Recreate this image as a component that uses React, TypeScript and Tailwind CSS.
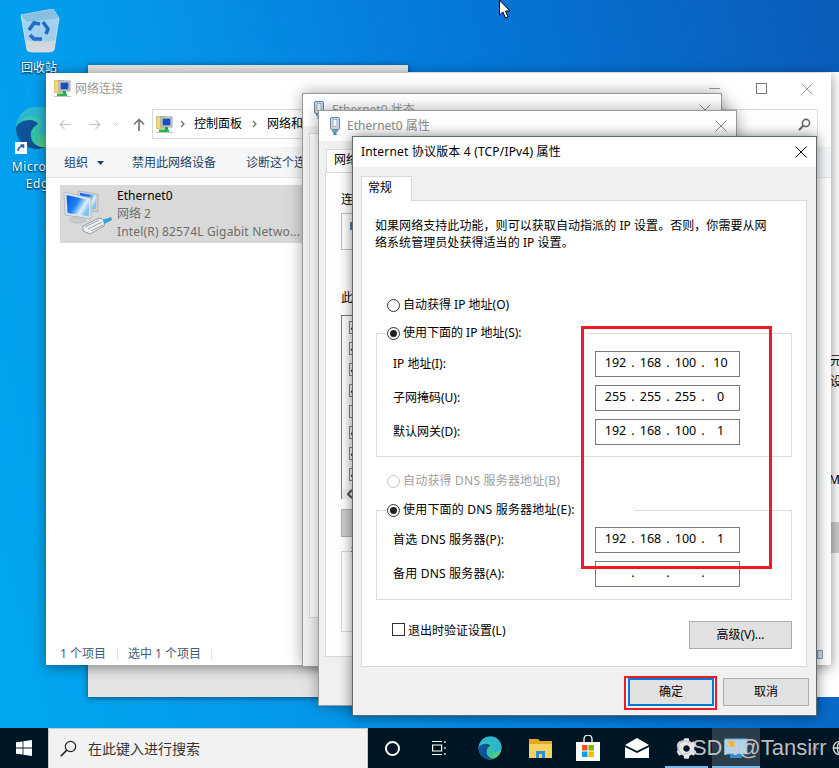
import { FaCog } from "react-icons/fa";
import { Globe, ChevronUp } from "lucide-react";

const octet = "w-[25px] text-center";

function IpBox({ v }: { v: string[] }) {
  return (
    <div className="flex h-[26px] w-[145px] items-center border border-[#7a7a7a] bg-white pb-[2px] pl-[7px] text-[12.5px] tracking-normal text-black">
      <span className={octet}>{v[0]}</span>
      <span className="w-[10px] text-center">.</span>
      <span className={octet}>{v[1]}</span>
      <span className="w-[10px] text-center">.</span>
      <span className={octet}>{v[2]}</span>
      <span className="w-[10px] text-center">.</span>
      <span className={octet}>{v[3]}</span>
    </div>
  );
}

function Row({ label, v }: { label: string; v: string[] }) {
  return (
    <div className="flex items-center justify-between pl-[16px] pr-[51px]">
      <span>{label}</span>
      <IpBox v={v} />
    </div>
  );
}

function Radio({ on, off }: { on?: boolean; off?: boolean }) {
  return (
    <span className={`flex h-[13px] w-[13px] shrink-0 items-center justify-center rounded-full border ${off ? "border-[#c4c4c4]" : "border-[#333]"} bg-white`}>
      {on && <span className="h-[7px] w-[7px] rounded-full bg-[#222]" />}
    </span>
  );
}

function CloseX({ size = 12, color = "#000" }: { size?: number; color?: string }) {
  return (
    <svg width={size} height={size} viewBox="0 0 12 12" stroke={color} strokeWidth="1" fill="none">
      <path d="M.5.5l11 11M11.5.5l-11 11" />
    </svg>
  );
}

function NetFolderIcon() {
  return (
    <svg width="17" height="17" viewBox="0 0 17 17">
      <rect x="0.5" y="0.5" width="9" height="12" fill="#f4d67a" stroke="#c9a94a" strokeWidth=".6" />
      <rect x="5" y="1" width="11" height="10" fill="#dfe6ee" stroke="#7d8a99" strokeWidth=".8" />
      <rect x="6.5" y="2.5" width="8" height="7" fill="#1e4fb4" />
      <rect x="9" y="11" width="3" height="3" fill="#1fa84a" />
      <rect x="3" y="13.5" width="10" height="2.5" fill="#27b455" />
      <rect x="0" y="16" width="17" height="1" fill="#bfc7c9" />
    </svg>
  );
}

function PlugIcon() {
  return (
    <svg width="12" height="18" viewBox="0 0 12 18">
      <rect x="1.5" y="0.5" width="9" height="12" rx="1.5" fill="#c7d6e6" stroke="#6f8499" />
      <rect x="4" y="2.5" width="4" height="7" fill="#f0f5fa" stroke="#8aa0b5" strokeWidth=".7" />
      <rect x="3" y="13" width="6" height="2" fill="#7f9ab3" />
      <rect x="4.5" y="15" width="3" height="3" fill="#1c9ad6" />
    </svg>
  );
}

function NetworkAdapterIcon() {
  return (
    <svg className="shrink-0" width="50" height="46" viewBox="0 0 50 46">
      <defs>
        <linearGradient id="scr" x1="0" y1="0" x2="1" y2="0.6">
          <stop offset="0" stopColor="#0a4fe0" />
          <stop offset=".5" stopColor="#1f86f5" />
          <stop offset=".8" stopColor="#dff1fd" />
          <stop offset="1" stopColor="#7fc2f5" />
        </linearGradient>
      </defs>
      <path d="M15 1l20 3v18l-20-3z" fill="#c9d0d6" stroke="#a4adb4" strokeWidth=".7" />
      <path d="M17 3l16 2.5v14L17 17.5z" fill="url(#scr)" />
      <path d="M1 2l27 6v21L2 25z" fill="#dfe4e8" stroke="#a4adb4" strokeWidth=".7" />
      <path d="M3.5 5L26 10v16.500L4.500 23z" fill="url(#scr)" />
      <ellipse cx="14.500" cy="30" rx="8" ry="3" fill="#c8cccd" stroke="#a9aeb0" strokeWidth=".5" />
      <path d="M20 36l16-8 6 2-1 6-14 8-7-3z" fill="#eef1f3" stroke="#7f888e" strokeWidth=".8" />
      <path d="M22 37l14-7M25 39l14-7M28 41l12-6" stroke="#8f989e" strokeWidth=".9" />
      <path d="M40 30l8-3 1 3-8 4z" fill="#2aa0dc" />
    </svg>
  );
}

function RecycleBin() {
  return (
    <svg width="40" height="44" viewBox="0 0 40 44">
      <defs>
        <linearGradient id="bin" x1="0" y1="0" x2="0" y2="1">
          <stop offset="0" stopColor="#b5dbf3" stopOpacity=".9" />
          <stop offset=".7" stopColor="#a8d2ec" stopOpacity=".95" />
          <stop offset="1" stopColor="#d9dde0" />
        </linearGradient>
      </defs>
      <path d="M1 6L33 0l6 9-5 32q-1 2-6 2H13q-5 0-6-2z" fill="url(#bin)" stroke="#e6f2f9" strokeWidth=".7" />
      <path d="M1 6l32-6 6 9-32 4z" fill="#7fb9dd" opacity=".75" />
      <path d="M6 31q14 4 30 0l-2 10q-1 2-6 2H13q-5 0-6-2z" fill="#d5d8da" opacity=".85" />
      <g stroke="#1f6dc4" strokeWidth="3.600" fill="none">
        <path d="M9 21l5-7 6 1" />
        <path d="M23 13l5 7-2 5" />
        <path d="M22 30h-8l-4-4" />
      </g>
    </svg>
  );
}

function EdgeIcon({ size = 44 }: { size?: number }) {
  return (
    <svg width={size} height={size} viewBox="0 0 44 44">
      <defs>
        <linearGradient id="eA" x1="0" y1="0" x2="1" y2="1">
          <stop offset="0" stopColor="#3bc6d8" />
          <stop offset=".6" stopColor="#35c1a0" />
          <stop offset="1" stopColor="#6fd86c" />
        </linearGradient>
        <linearGradient id="eB" x1="0" y1="0" x2="1" y2="1">
          <stop offset="0" stopColor="#0c59a4" />
          <stop offset="1" stopColor="#114a8b" />
        </linearGradient>
      </defs>
      <circle cx="22" cy="22" r="21" fill="url(#eA)" />
      <path d="M1 22C3 8 15 1 24 1c10 0 19 8 19 19 0 6-5 9-11 9-4 0-8-2-8-4 0-2 3-3 3-7 0-5-5-8-10-8C9 10 3 15 1 22z" fill="#2bb5cf" />
      <path d="M1 22c0 12 9 21 21 21 3 0 6-.6 8-2-6 1-13-3-14-10-1-6 2-10 7-13-2-3-5-4-8-4C8 14 2 17 1 22z" fill="url(#eB)" />
    </svg>
  );
}

function WinLogo() {
  return (
    <svg width="16" height="16" viewBox="0 0 16 16" fill="#fff">
      <path d="M0 2.3l6.6-.9v6.2H0zM7.4 1.3L16 0v7.6H7.4zM0 8.4h6.6v6.2L0 13.7zM7.4 8.4H16V16l-8.6-1.2z" />
    </svg>
  );
}

function BehindStatus() {
  return (
    <div className="absolute left-[302px] top-[93px] flex h-[574px] w-[420px] flex-col border border-[#9a9a9a] bg-[#f0f0f0] shadow-[0_0_14px_rgba(0,0,0,0.35)]">
      <div className="flex h-[32px] items-center bg-white pl-[10px]">
        <PlugIcon />
        <span className="ml-[7px] text-[#9a9a9a]">Ethernet0 状态</span>
        <span className="ml-auto mr-[10px]"><CloseX color="#8a8a8a" /></span>
      </div>
      <div className="mx-[6px] mt-[7px] flex-1 border border-[#d9d9d9] bg-white" />
      <div className="h-[48px]" />
    </div>
  );
}

function BehindProps() {
  return (
    <div className="absolute left-[318px] top-[110px] flex h-[596px] w-[419px] flex-col border border-[#9a9a9a] bg-[#f0f0f0] shadow-[0_0_14px_rgba(0,0,0,0.35)]">
      <div className="flex h-[30px] items-center bg-white pl-[10px]">
        <PlugIcon />
        <span className="ml-[6px] text-[#8a8a8a]">Ethernet0 属性</span>
        <span className="ml-auto mr-[9px]"><CloseX color="#8a8a8a" /></span>
      </div>
      <div className="ml-[7px] mt-[8px] h-[23px] w-[60px] border border-b-0 border-[#d9d9d9] bg-white pl-[7px] leading-[20px] text-black">网络</div>
      <div className="mx-[6px] flex-1 border border-[#d9d9d9] bg-white pl-[15px] text-black">
        <div className="mt-[18px] h-[22px]">连接时使用：</div>
        <div className="h-[37px] w-[300px] border border-[#c0c0c0] pl-[8px] pt-[8px]">
          <span className="block h-[8px] w-[4px] bg-[#4a7fb5]" />
        </div>
        <div className="mt-[39px] h-[26px]">此连接使用下列项目：</div>
        <div className="flex h-[184px] w-[300px] flex-col gap-[8px] border border-[#7a7a7a] pt-[5px]">
          {[1, 1, 1, 1, 0, 1, 1, 1].map((c, i) => (
            <div key={i} className="ml-[7px] h-[13px] w-[13px] shrink-0 border border-[#888] bg-white text-[9px] leading-[11px] text-black">{c ? "✔" : ""}</div>
          ))}
          <div className="mt-auto flex h-[17px] items-center bg-[#f0f0f0] pl-[5px]">
            <svg width="6" height="10" viewBox="0 0 6 10"><path d="M5 1L1 5l4 4" stroke="#555" strokeWidth="2" fill="none" /></svg>
          </div>
        </div>
        <div className="mt-[10px] h-[28px] w-[100px] border border-[#adadad] bg-[#cccccc]" />
        <div className="mt-[14px] h-[81px] w-[300px] border border-[#d9d9d9] pl-[9px]">
          <span className="relative -top-[10px]">描述</span>
        </div>
      </div>
      <div className="h-[48px]" />
    </div>
  );
}

function Explorer() {
  return (
    <div className="absolute left-[46px] top-[73px] flex h-[592px] w-[785px] flex-col bg-white shadow-[0_2px_12px_rgba(0,0,0,0.45)]">
      <div className="flex h-[36px] shrink-0 items-center pb-[5px] pl-[8px]">
        <NetFolderIcon />
        <span className="ml-[4px] text-[#9a9a9a]">网络连接</span>
        <div className="ml-auto flex items-center text-[#8a8a8a]">
          <span className="mr-[36px] h-px w-[11px] bg-[#999]" />
          <span className="mr-[34px] h-[11px] w-[11px] border border-[#777]" />
          <span className="mr-[18px]"><CloseX color="#999" /></span>
        </div>
      </div>
      <div className="flex h-[30px] shrink-0 items-center">
        <div className="flex w-[106px] items-center pl-[13px]">
          <svg width="12" height="11" viewBox="0 0 12 11" stroke="#ccc" strokeWidth="1.3" fill="none"><path d="M12 5.500H1M5.500 1L1 5.500 5.500 10" /></svg>
          <svg className="ml-[18px]" width="12" height="11" viewBox="0 0 12 11" stroke="#ccc" strokeWidth="1.3" fill="none"><path d="M0 5.500h11M6.500 1L11 5.500 6.500 10" /></svg>
          <svg className="ml-[11px]" width="7" height="5" viewBox="0 0 7 5" stroke="#ccc" fill="none"><path d="M1 1l2.500 2.500L6 1" /></svg>
          <svg className="ml-[14px]" width="12" height="13" viewBox="0 0 12 13" stroke="#777" strokeWidth="1.7" fill="none"><path d="M6 13V1.500M1 6.500l5-5 5 5" /></svg>
        </div>
        <div className="flex h-[30px] w-[666px] items-center border border-[#d9d9d9] pl-[3px] text-black">
          <NetFolderIcon />
          <svg className="ml-[7px]" width="5" height="8" viewBox="0 0 5 8" stroke="#666" strokeWidth="1.2" fill="none"><path d="M1 1l3 3-3 3" /></svg>
          <span className="ml-[9px]">控制面板</span>
          <svg className="ml-[10px]" width="5" height="8" viewBox="0 0 5 8" stroke="#666" strokeWidth="1.2" fill="none"><path d="M1 1l3 3-3 3" /></svg>
          <span className="ml-[10px]">网络和 Internet</span>
          <svg className="ml-auto mr-[6px]" width="13" height="13" viewBox="0 0 13 13" stroke="#666" strokeWidth="1.6" fill="none"><circle cx="8" cy="5" r="3.600" /><path d="M5.300 7.700L1 12" strokeWidth="2" /></svg>
        </div>
      </div>
      <div className="mt-[8px] flex h-[31px] shrink-0 items-center border-b border-[#e6e6e6] bg-[#f5f6f7] pl-[18px] pt-[1px] text-[#24405e]">
        <span>组织</span>
        <svg className="ml-[9px]" width="7" height="4" viewBox="0 0 7 4" fill="#24405e"><path d="M0 0h7L3.500 4z" /></svg>
        <span className="ml-[28px]">禁用此网络设备</span>
        <span className="ml-[30px]">诊断这个连接</span>
      </div>
      <div className="flex-1 pl-[14px] pt-[7px]">
        <div className="flex h-[58px] w-[300px] bg-[#d9d9d9] pl-[3px] pt-[5px]">
          <NetworkAdapterIcon />
          <div className="ml-[4px] flex flex-col leading-[18px] text-[#6d6d6d]">
            <span className="-mt-[3px] text-black">Ethernet0</span>
            <span>网络 2</span>
            <span className="whitespace-nowrap tracking-[0.17px]">Intel(R) 82574L Gigabit Netwo...</span>
          </div>
        </div>
      </div>
      <div className="flex h-[24px] shrink-0 items-center pl-[14px] pt-[2px] text-[#3f5a78]">
        <span>1 个项目</span>
        <span className="ml-[11px] h-[11px] w-px bg-[#e2e2e2]" />
        <span className="ml-[10px]">选中 1 个项目</span>
        <span className="ml-[10px] h-[11px] w-px bg-[#e2e2e2]" />
        <span className="ml-auto mr-[8px] h-[9px] w-[6px] border border-[#8aa0b5] bg-[#cfdcea]" />
      </div>
    </div>
  );
}

function Ipv4Dialog() {
  return (
    <div className="absolute left-[352px] top-[136px] flex h-[580px] w-[465px] flex-col border border-[#5d6a70] bg-[#f0f0f0] text-black shadow-[0_0_12px_rgba(0,0,0,0.5)]">
      <div className="flex h-[30px] shrink-0 items-center bg-white pl-[8px]">
        <span className="tracking-[0.18px]">Internet 协议版本 4 (TCP/IPv4) 属性</span>
        <span className="ml-auto mr-[9px]"><CloseX /></span>
      </div>
      <div className="-mb-px flex shrink-0 pl-[8px] pt-[9px]">
        <div className="relative z-10 h-[25px] w-[51px] border border-b-0 border-[#d9d9d9] bg-white pl-[6px] pt-[2px]">常规</div>
      </div>
      <div className="ml-[8px] mr-[9px] flex h-[467px] shrink-0 flex-col border border-[#d9d9d9] bg-white">
        <p className="ml-[13px] mt-[16px] w-[402px] leading-[17px] tracking-[0.06px]">
          如果网络支持此功能，则可以获取自动指派的 IP 设置。否则，你需要从网络系统管理员处获得适当的 IP 设置。
        </p>
        <div className="ml-[25px] mt-[46px] flex h-[16px] items-center gap-[3px]">
          <Radio />
          <span>自动获得 IP 地址(O)</span>
        </div>
        <div className="ml-[14px] mt-[20px] flex h-[124px] w-[416px] flex-col border border-[#dcdcdc]">
          <div className="-mt-[10px] ml-[10px] flex h-[18px] w-[200px] items-center gap-[3px] bg-white">
            <Radio on />
            <span>使用下面的 IP 地址(S):</span>
          </div>
          <div className="mt-[9px] flex flex-col gap-[8px]">
            <Row label="IP 地址(I):" v={["192", "168", "100", "10"]} />
            <Row label="子网掩码(U):" v={["255", "255", "255", "0"]} />
            <Row label="默认网关(D):" v={["192", "168", "100", "1"]} />
          </div>
        </div>
        <div className="ml-[25px] mt-[16px] flex h-[16px] items-center gap-[3px] tracking-[0.2px] text-[#a0a0a0]">
          <Radio off />
          <span>自动获得 DNS 服务器地址(B)</span>
        </div>
        <div className="ml-[14px] mt-[21px] flex h-[90px] w-[416px] flex-col border border-[#dcdcdc] tracking-[0.2px]">
          <div className="-mt-[10px] ml-[10px] flex h-[18px] w-[247px] items-center gap-[3px] bg-white">
            <Radio on />
            <span>使用下面的 DNS 服务器地址(E):</span>
          </div>
          <div className="mt-[8px] flex flex-col gap-[8px]">
            <Row label="首选 DNS 服务器(P):" v={["192", "168", "100", "1"]} />
            <Row label="备用 DNS 服务器(A):" v={["", "", "", ""]} />
          </div>
        </div>
        <div className="ml-[30px] mt-[21px] flex h-[28px] w-[400px] justify-between">
          <div className="flex items-start gap-[3px] pt-[2px]">
            <span className="h-[13px] w-[13px] border border-[#333] bg-white" />
            <span className="-mt-[1px]">退出时验证设置(L)</span>
          </div>
          <div className="flex h-[28px] w-[103px] items-center justify-center border border-[#adadad] bg-[#e1e1e1]">高级(V)...</div>
        </div>
      </div>
      <div className="mr-[7px] mt-[11px] flex justify-end gap-[9px]">
        <div className="flex h-[28px] w-[86px] items-center justify-center border-2 border-[#0078d7] bg-[#e1e1e1]">确定</div>
        <div className="flex h-[28px] w-[86px] items-center justify-center border border-[#adadad] bg-[#e1e1e1]">取消</div>
      </div>
    </div>
  );
}

function Taskbar() {
  return (
    <div className="flex h-[40px] shrink-0 items-center bg-[#001624] text-white">
      <div className="flex w-[48px] justify-center"><WinLogo /></div>
      <div className="flex h-[40px] w-[320px] items-center border-[1.5px] border-b-0 border-[#c8c8c8] bg-[#f2f2f2] pl-[11px]">
        <svg width="17" height="17" viewBox="0 0 17 17" stroke="#222" fill="none" strokeWidth="1.2"><circle cx="10.500" cy="6.500" r="5.200" /><path d="M6.600 10.400L.8 16.200" strokeWidth="1.6" /></svg>
        <span className="ml-[11px] text-[14px] text-[#333]">在此键入进行搜索</span>
      </div>
      <div className="flex w-[48px] justify-center">
        <span className="h-[15px] w-[15px] rounded-full border-[2.5px] border-white" />
      </div>
      <div className="flex w-[48px] justify-center">
        <svg width="16" height="16" viewBox="0 0 16 16" stroke="#fff" strokeWidth="1.2" fill="none"><path d="M0 1.500h10M0 14.500h10M.6 5h9v6h-9zM13 1v2M13 7v2M13 13v2" /></svg>
      </div>
      <div className="flex w-[52px] justify-center"><EdgeIcon size={24} /></div>
      <div className="flex w-[48px] justify-center">
        <svg width="23" height="20" viewBox="0 0 23 20">
          <path d="M0 1h9l2 2h12v17H0z" fill="#e5a823" />
          <path d="M0 6h23v14H0z" fill="#f6d35f" />
          <path d="M7 13h9v7h-3v-4h-3v4H7z" fill="#2f8fd0" />
        </svg>
      </div>
      <div className="flex w-[48px] justify-center">
        <svg width="24" height="26" viewBox="0 0 24 26">
          <path d="M8 7V4a4 4 0 018 0v3" stroke="#fff" strokeWidth="1.3" fill="none" />
          <path d="M0 7h24v19H0z" fill="#fff" />
          <rect x="6" y="10" width="5.500" height="5.500" fill="#f25022" />
          <rect x="12.500" y="10" width="5.500" height="5.500" fill="#7fba00" />
          <rect x="6" y="16.500" width="5.500" height="5.500" fill="#00a4ef" />
          <rect x="12.500" y="16.500" width="5.500" height="5.500" fill="#ffb900" />
        </svg>
      </div>
      <div className="flex w-[50px] justify-center">
        <svg width="24" height="20" viewBox="0 0 24 20" fill="#fff">
          <path d="M12 0l12 7-12 6L0 7z" />
          <path d="M0 9l12 6 12-6v11H0z" />
        </svg>
      </div>
      <div className="relative flex h-[40px] w-[49px] items-center justify-center">
        <FaCog className="text-[#e8e8e8]" size={21} />
        <span className="absolute bottom-0 left-[3px] right-[3px] h-[2px] bg-[#76b9ed]" />
      </div>
      <div className="relative ml-[1px] flex h-[40px] w-[48px] items-center justify-center bg-[#2b3c4a]">
        <svg width="24" height="22" viewBox="0 0 24 22">
          <rect x="1" y="2" width="22" height="15" fill="#a9d3ee" stroke="#6ea8d0" />
          <rect x="3" y="4" width="8" height="6" fill="#e8b83a" />
          <rect x="6" y="17" width="12" height="4" fill="#2f8fd0" />
        </svg>
        <span className="absolute bottom-0 left-0 right-0 h-[2px] bg-[#76b9ed]" />
      </div>
      <div className="flex w-[79px] items-center gap-[11px] pl-[49px]">
        <ChevronUp className="shrink-0" size={12} color="#bbb" strokeWidth={1.5} />
        <Globe className="shrink-0" size={16} color="#ddd" />
      </div>
    </div>
  );
}

export default function App() {
  return (
    <div className="relative flex h-[768px] w-[839px] flex-col overflow-hidden font-['Noto_Sans','Noto_Sans_CJK_SC',sans-serif] text-[12px]">
      <div className="relative flex-1 bg-[linear-gradient(75deg,#00a9f0_0%,#0598ea_30%,#0478d8_62%,#0b5bb8_100%)]">
        {/* desktop icons */}
        <div className="absolute left-[20px] top-[9px]"><RecycleBin /></div>
        <span className="absolute left-[21px] top-[59px] text-white [text-shadow:0_1px_2px_#000]">回收站</span>
        <div className="absolute left-[15px] top-[106px]"><EdgeIcon /></div>
        <span className="absolute left-[15px] top-[142px] flex h-[12px] w-[12px] items-center justify-center bg-white">
          <svg width="8" height="8" viewBox="0 0 8 8" fill="none" stroke="#1a5fb4" strokeWidth="1.6"><path d="M1 7q0-4 5-5M3.500 1H6.500V4" /></svg>
        </span>
        <span className="absolute left-[6px] top-[158px] w-[70px] text-center leading-[17px] tracking-[0.6px] text-white [text-shadow:0_1px_2px_#000]">Microsoft Edge</span>

        {/* windows behind everything */}
        <div className="absolute left-[88px] top-[65px] h-[632px] w-[320px] bg-[#e4e4e4] shadow-[0_1px_6px_rgba(0,0,0,0.5)]" />
        <div className="absolute left-[408px] top-[72px] h-[625px] w-[431px] bg-white">
          <div className="ml-[422px] mt-[278px] w-[30px] leading-[21px] text-black">元<br />设</div>
          <div className="ml-[421px] mt-[79px] text-black">MB</div>
          <div className="ml-[421px] mt-[33px] h-[31px] bg-[#cccccc]" />
        </div>

        <Explorer />
        <BehindStatus />
        <BehindProps />
        <Ipv4Dialog />

        {/* red marks drawn on the screenshot */}
        <div className="absolute left-[581px] top-[326px] h-[243px] w-[191px] border-[3px] border-[#ed1c24]" />
        <div className="absolute left-[624px] top-[676px] h-[34px] w-[93px] border-[2px] border-[#ed1c24]" />

        {/* mouse pointer */}
        <svg className="absolute left-[498px] top-0" width="13" height="20" viewBox="0 0 13 20">
          <path d="M1.500 0v15l3.500-3 2.500 6 2.500-1-2.500-6h4.500z" fill="#fff" stroke="#000" strokeWidth="1" />
        </svg>
      </div>
      <Taskbar />
      <span className="absolute left-[676px] top-[735px] font-['Liberation_Sans',sans-serif] text-[22px] leading-[26px] text-[#d0d0d0] opacity-90">CSDN@Tansirr</span>
    </div>
  );
}
